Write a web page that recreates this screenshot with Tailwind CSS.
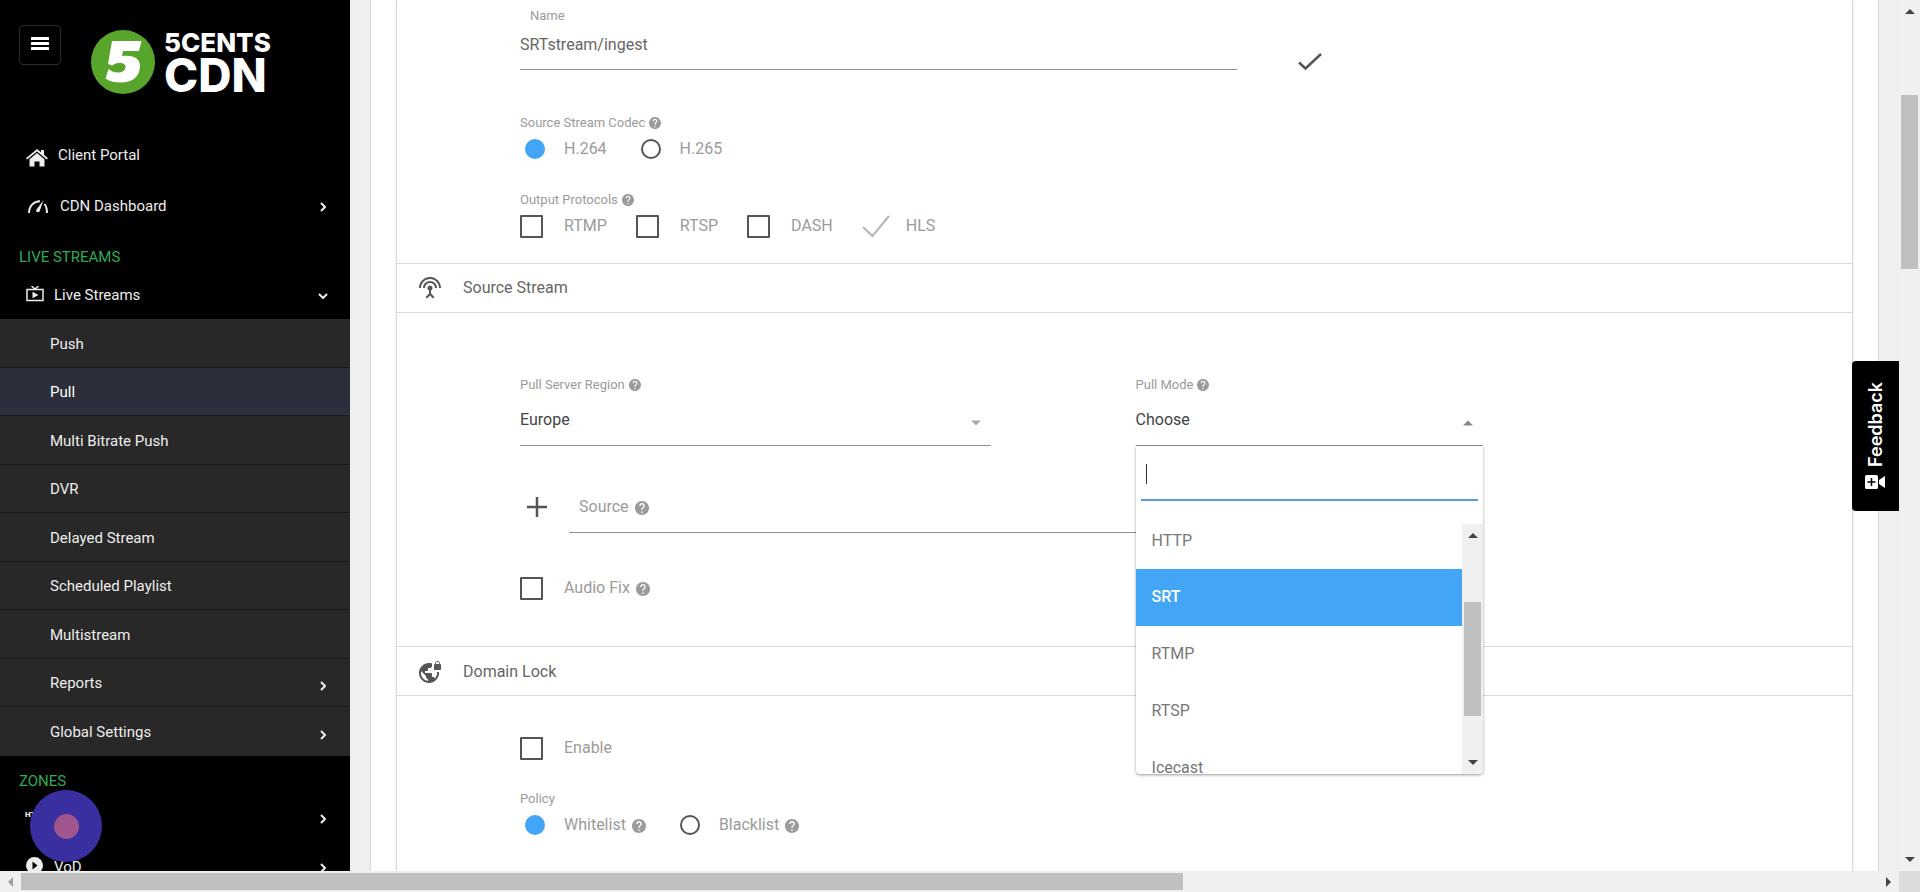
<!DOCTYPE html>
<html lang="en">
  <head>
    <meta charset="UTF-8" />
    <meta name="viewport" content="width=device-width, initial-scale=1.0" />
    <title>5centsCDN - Pull Stream</title>
    <script src="https://cdn.jsdelivr.net/npm/@tailwindcss/browser@4"></script>
  </head>
  <body class="flex h-screen flex-col overflow-hidden bg-[#efefef] font-['Roboto',sans-serif] text-base text-[#9b9b9b]">
    <!-- Shared icons -->
    <svg class="hidden">
      <symbol id="help" viewBox="2 2 20 20">
        <path fill="currentColor" d="M12 2C6.48 2 2 6.48 2 12s4.48 10 10 10 10-4.48 10-10S17.52 2 12 2zm1 17h-2v-2h2v2zm2.07-7.75l-.9.92C13.45 12.9 13 13.5 13 15h-2v-.5c0-1.1.45-2.1 1.17-2.83l1.24-1.26c.37-.36.59-.86.59-1.41 0-1.1-.9-2-2-2s-2 .9-2 2H8c0-2.21 1.79-4 4-4s4 1.79 4 4c0 .88-.36 1.68-.93 2.25z" />
      </symbol>
      <symbol id="chevron" viewBox="0 0 6 10">
        <path d="M1 1l4 4-4 4" fill="none" stroke="currentColor" stroke-width="2" />
      </symbol>
      <symbol id="caret" viewBox="0 0 10 5">
        <path d="M0 5l5-5 5 5z" fill="currentColor" />
      </symbol>
    </svg>

    <div class="flex min-h-0 flex-1">
      <!-- Sidebar -->
      <aside class="relative w-[350px] shrink-0 overflow-hidden bg-black text-[15px] text-[#ededed]">
        <div class="flex h-[130px] items-start pl-[19px] pt-[25px]">
          <button aria-label="Toggle menu" class="flex h-10 w-[42px] items-center justify-center rounded border border-[#2b2b2b] pb-1">
            <svg class="h-[13px] w-[18px]" viewBox="0 0 18 13" fill="#fff">
              <rect width="18" height="3" rx=".5" /><rect y="5" width="18" height="3" rx=".5" /><rect y="10" width="18" height="3" rx=".5" />
            </svg>
          </button>
          <a href="#" aria-label="5centsCDN" class="ml-[30px] mt-[5px] flex items-start text-white">
            <svg class="size-16" viewBox="0 0 64 64">
              <circle cx="32" cy="32" r="32" fill="#58a52c" />
              <path fill="#fff" d="M21 11h29.500l-2.500 10H32l-1 5c11-1.500 18.500 2 18 11-.6 10-8 15.500-19 15.500-6 0-11-1-15.500-4l3-9.500c3 2.500 6 3.500 9 3.500 4.500 0 7.500-1.500 8-5 .4-3-2-4.500-5.500-4.500-3 0-5.500.5-7.500 2.500l-4.500-1.500z" />
            </svg>
            <span class="ml-[9px] flex flex-col font-['Inter',sans-serif] font-extrabold">
              <span class="text-[26px] leading-[25px]">5CENTS</span>
              <span class="text-[46px] leading-[40px]">CDN</span>
            </span>
          </a>
        </div>
        <nav>
          <a href="#" class="flex h-[51px] items-center pl-[26px]">
            <svg class="mr-2.5 mt-1 h-[18px] w-[22px]" viewBox="0 0 22 18" fill="currentColor">
              <path d="M11 0l4 3.300V1h3v4.800l4 3.400-1.200 1.400L11 2.400 1.200 10.600 0 9.200z" />
              <path d="M11 4l7.500 6.200V17.500h-5v-5h-5v5h-5v-7.300z" />
            </svg>
            Client Portal
          </a>
          <a href="#" class="flex h-[51px] items-center pl-7 pr-6">
            <svg class="mr-3 h-[14px] w-5" viewBox="0 0 20 14" fill="none" stroke="currentColor" stroke-width="2">
              <path d="M1 13C1 6 6 1 12 1.200M16.500 4C18.500 6.500 19 9.500 19 13" />
              <path fill="currentColor" stroke="none" d="M15.500 0l-4 11.500a2 2 0 01-3.500-1.300z" />
            </svg>
            <span class="flex-1">CDN Dashboard</span>
            <svg class="h-[10px] w-1.5"><use href="#chevron" /></svg>
          </a>
          <h2 class="flex h-[50px] items-center pl-[19px] text-[#2faa53]">LIVE STREAMS</h2>
          <a href="#" class="flex h-[37px] items-center pb-2.5 pl-[26px] pr-[22px]">
            <svg class="mb-1 mr-2.5 h-4 w-[18px]" viewBox="0 0 18 16" fill="none" stroke="currentColor" stroke-width="1.500">
              <path d="M5.500 0L9 3l3.500-3M1 3.500h16v11H1z" />
              <path fill="currentColor" stroke="none" d="M6.500 5.800l6 3.200-6 3.200z" />
            </svg>
            <span class="flex-1">Live Streams</span>
            <svg class="h-1.5 w-[10px]" viewBox="0 0 10 6"><path d="M1 1l4 4 4-4" fill="none" stroke="currentColor" stroke-width="2" /></svg>
          </a>
          <ul class="grid h-[437px] auto-rows-fr divide-y divide-[#1b1b1b] bg-[#282828]">
            <li><a href="#" class="flex h-full items-center pl-[50px] pt-0.5">Push</a></li>
            <li><a href="#" class="flex h-full items-center bg-[#2c2f3b] pl-[50px] pt-0.5 text-white">Pull</a></li>
            <li><a href="#" class="flex h-full items-center pl-[50px] pt-0.5">Multi Bitrate Push</a></li>
            <li><a href="#" class="flex h-full items-center pl-[50px] pt-0.5">DVR</a></li>
            <li><a href="#" class="flex h-full items-center pl-[50px] pt-0.5">Delayed Stream</a></li>
            <li><a href="#" class="flex h-full items-center pl-[50px] pt-0.5">Scheduled Playlist</a></li>
            <li><a href="#" class="flex h-full items-center pl-[50px] pt-0.5">Multistream</a></li>
            <li>
              <a href="#" class="flex h-full items-center pl-[50px] pr-6 pt-0.5"><span class="flex-1">Reports</span><svg class="mt-1 h-[10px] w-1.5"><use href="#chevron" /></svg></a>
            </li>
            <li>
              <a href="#" class="flex h-full items-center pl-[50px] pr-6 pt-0.5"><span class="flex-1">Global Settings</span><svg class="mt-1 h-[10px] w-1.5"><use href="#chevron" /></svg></a>
            </li>
          </ul>
          <h2 class="flex h-[38px] items-end pl-[19px] text-[#2faa53]"><span class="leading-[26px]">ZONES</span></h2>
          <a href="#" class="flex h-[49px] items-center justify-between pl-[25px] pr-6">
            <span class="pb-2 text-[8px] font-black">HTTP</span>
            <svg class="h-[10px] w-1.5"><use href="#chevron" /></svg>
          </a>
          <a href="#" class="flex h-[49px] items-center pl-[26px] pr-6">
            <svg class="mb-1 mr-[11px] size-[17px]" viewBox="0 0 17 17"><circle cx="8.500" cy="8.500" r="8.500" fill="currentColor" /><path d="M6.500 4.500l5 4-5 4z" fill="#000" /></svg>
            <span class="flex-1">VoD</span>
            <svg class="h-[10px] w-1.5"><use href="#chevron" /></svg>
          </a>
        </nav>
        <!-- Recorder bubble -->
        <button aria-label="Record" class="absolute left-[30px] top-[790px] flex size-[72px] items-center justify-center rounded-full bg-[#3a2fa0]">
          <span class="size-[25px] rounded-full bg-[#a0558c]"></span>
        </button>
      </aside>

      <!-- Page -->
      <main class="relative min-w-0 flex-1 overflow-hidden px-5">
        <div class="h-full border-x border-[#d9d9d9] bg-white px-[25px]">
          <form class="h-full border-x border-[#d9d9d9] shadow">
            <section class="pb-[21px] pl-[123px] pt-1.5">
              <div class="grid grid-cols-[718fr_615fr]">
                <div>
                  <label for="name" class="block px-2.5 text-[13px] leading-5">Name</label>
                  <input id="name" type="text" value="SRTstream/ingest" class="h-11 w-full border-b border-[#8f8f8f] pb-1.5 text-[#666] outline-none" />
                </div>
                <button type="button" aria-label="Name is available" class="self-end justify-self-start pl-[61px]">
                  <svg class="h-[17px] w-6" viewBox="0 0 24 17"><path d="M1 9.500l6.500 6L23 1" fill="none" stroke="#555" stroke-width="2.500" /></svg>
                </button>
              </div>
              <fieldset class="mt-[43px]">
                <legend class="text-[13px] leading-5"><span class="flex items-center gap-1">Source Stream Codec <svg class="size-3"><use href="#help" /></svg></span></legend>
                <div class="flex h-8 items-center gap-[29px]">
                  <label class="flex items-center gap-[19px] pl-[5px]"><input type="radio" name="codec" checked class="size-5 appearance-none rounded-full border-2 border-[#555] checked:border-[#42a5f5] checked:bg-[#42a5f5]" />H.264</label>
                  <label class="flex items-center gap-[19px] pl-[5px]"><input type="radio" name="codec" class="size-5 appearance-none rounded-full border-2 border-[#555] checked:border-[#42a5f5] checked:bg-[#42a5f5]" />H.265</label>
                </div>
              </fieldset>
              <fieldset class="mt-[25px]">
                <legend class="text-[13px] leading-5"><span class="flex items-center gap-1">Output Protocols <svg class="size-3"><use href="#help" /></svg></span></legend>
                <div class="flex h-8 items-center gap-[29px]">
                  <label class="flex items-center gap-[21px]"><input type="checkbox" class="size-[23px] appearance-none rounded-[1px] border-2 border-[#555]" />RTMP</label>
                  <label class="flex items-center gap-[21px]"><input type="checkbox" class="size-[23px] appearance-none rounded-[1px] border-2 border-[#555]" />RTSP</label>
                  <label class="flex items-center gap-[21px]"><input type="checkbox" class="size-[23px] appearance-none rounded-[1px] border-2 border-[#555]" />DASH</label>
                  <label class="flex items-center gap-4">
                    <span class="grid">
                      <input type="checkbox" checked disabled class="col-start-1 row-start-1 size-7 appearance-none" />
                      <svg class="col-start-1 row-start-1 size-7" viewBox="0 0 28 28"><path d="M1 15l9.500 9L27 4" fill="none" stroke="#b5b5b5" stroke-width="2" /></svg>
                    </span>
                    HLS
                  </label>
                </div>
              </fieldset>
            </section>

            <h3 class="flex h-[50px] items-center gap-[21px] border-y border-[#dadada] pl-[21px] text-[#666]">
              <svg class="size-6" viewBox="0 0 24 24" fill="#555">
                <path d="M12 5c-3.870 0-7 3.130-7 7h2c0-2.760 2.240-5 5-5s5 2.240 5 5h2c0-3.870-3.130-7-7-7zm1 9.290c.88-.39 1.500-1.260 1.500-2.290 0-1.380-1.120-2.500-2.500-2.500S9.500 10.620 9.500 12c0 1.020.62 1.900 1.500 2.290v3.300L7.590 21 9 22.410l3-3 3 3L16.410 21 13 17.590v-3.300zM12 1C5.930 1 1 5.930 1 12h2c0-4.970 4.030-9 9-9s9 4.030 9 9h2c0-6.070-4.930-11-11-11z" />
              </svg>
              Source Stream
            </h3>

            <section class="pb-[42px] pl-[123px] pt-[62px]">
              <div class="grid grid-cols-[471fr_145fr_348fr_369fr]">
                <div>
                  <label for="region" class="flex items-center gap-1 text-[13px] leading-5">Pull Server Region <svg class="size-3"><use href="#help" /></svg></label>
                  <div class="grid items-center">
                    <select id="region" class="col-start-1 row-start-1 h-[51px] w-full appearance-none border-b border-[#8f8f8f] text-[#444] outline-none">
                      <option>Europe</option>
                    </select>
                    <svg class="pointer-events-none col-start-1 row-start-1 mr-2.5 mt-1 h-1.5 w-[10px] rotate-180 justify-self-end text-[#aaa]"><use href="#caret" /></svg>
                  </div>
                </div>
                <div class="relative col-start-3">
                  <label for="mode" class="flex items-center gap-1 text-[13px] leading-5">Pull Mode <svg class="size-3"><use href="#help" /></svg></label>
                  <div class="grid items-center">
                    <select id="mode" class="col-start-1 row-start-1 h-[51px] w-full appearance-none border-b border-[#8f8f8f] text-[#444] outline-none">
                      <option>Choose</option>
                    </select>
                    <svg class="pointer-events-none col-start-1 row-start-1 mr-2.5 mt-1 h-1.5 w-[10px] justify-self-end text-[#888]"><use href="#caret" /></svg>
                  </div>
                  <!-- Open menu -->
                  <div class="absolute inset-x-0 top-full z-10 overflow-hidden rounded-b bg-white text-[#777] shadow-[0_1px_3px_rgba(0,0,0,0.4)]">
                    <div class="px-[5px] pb-[23px]">
                      <div class="flex h-[55px] items-center border-b-2 border-[#5a9fd0] pb-3.5 pl-[5px] pt-4">
                        <span class="h-5 w-px bg-[#333]"></span>
                        <input type="text" aria-label="Search pull mode" class="min-w-0 flex-1 outline-none" />
                      </div>
                    </div>
                    <div class="flex h-[250px]">
                      <ul role="listbox" class="flex flex-1 flex-col justify-end overflow-hidden">
                        <li role="option" class="-mt-3 flex h-[57px] shrink-0 items-center pl-4">HTTP</li>
                        <li role="option" aria-selected="true" class="flex h-[57px] shrink-0 items-center bg-[#42a5f5] pb-0.5 pl-4 font-medium text-white">SRT</li>
                        <li role="option" class="flex h-[57px] shrink-0 items-center pb-0.5 pl-4">RTMP</li>
                        <li role="option" class="flex h-[57px] shrink-0 items-center pb-0.5 pl-4">RTSP</li>
                        <li role="option" class="flex h-[34px] shrink-0 items-start pl-4 pt-4">Icecast</li>
                      </ul>
                      <div class="flex w-[21px] flex-col items-center bg-[#f0f0f0] py-[9px] text-[#444]">
                        <svg class="h-[5px] w-[10px]"><use href="#caret" /></svg>
                        <div class="mt-16 h-[114px] w-[17px] bg-[#c0c0c0]"></div>
                        <svg class="mt-auto h-[5px] w-[10px] rotate-180"><use href="#caret" /></svg>
                      </div>
                    </div>
                  </div>
                </div>
              </div>
              <div class="mt-[35px] grid h-[52px] grid-cols-[964fr_369fr]">
                <div class="flex">
                  <button type="button" aria-label="Add source" class="flex w-[49px] items-center pl-[7px]">
                    <svg class="size-5" viewBox="0 0 20 20"><path d="M10 0v20M0 10h20" stroke="#555" stroke-width="2.500" /></svg>
                  </button>
                  <div class="grid flex-1 items-center border-b border-[#8f8f8f]">
                    <label for="source" class="col-start-1 row-start-1 flex items-center gap-1.5 pl-2.5">Source <svg class="mt-0.5 size-3.5"><use href="#help" /></svg></label>
                    <input id="source" type="text" class="col-start-1 row-start-1 h-full w-full bg-transparent outline-none" />
                  </div>
                </div>
              </div>
              <div class="mt-[39px] flex h-8 items-center">
                <label class="flex items-center gap-[21px]"><input type="checkbox" class="size-[23px] appearance-none rounded-[1px] border-2 border-[#555]" /><span class="flex items-center gap-1.5">Audio Fix <svg class="mt-0.5 size-3.5"><use href="#help" /></svg></span></label>
              </div>
            </section>

            <h3 class="flex h-[50px] items-center gap-[21px] border-y border-[#dadada] pl-[21px] pt-0.5 text-[#666]">
              <svg class="size-6" viewBox="0 0 24 24" fill="#555">
                <path d="M22 4v-.5C22 2.120 20.880 1 19.500 1S17 2.120 17 3.500V4c-.55 0-1 .45-1 1v4c0 .55.45 1 1 1h5c.55 0 1-.45 1-1V5c0-.55-.45-1-1-1zm-.8 0h-3.400v-.5c0-.94.76-1.700 1.700-1.700s1.700.76 1.700 1.700V4zm-2.280 8c.04.33.08.66.08 1 0 2.080-.8 3.970-2.100 5.390-.26-.81-1-1.390-1.900-1.390h-1v-3c0-.55-.45-1-1-1H7v-2h2c.55 0 1-.45 1-1V8h2c1.100 0 2-.9 2-2V3.460c-.95-.3-1.950-.46-3-.46C5.480 3 1 7.480 1 13s4.480 10 10 10 10-4.480 10-10c0-.34-.02-.67-.05-1h-2.030zM10 20.930c-3.950-.49-7-3.850-7-7.930 0-.62.08-1.210.21-1.790L8 16v1c0 1.100.9 2 2 2v1.930z" />
              </svg>
              Domain Lock
            </h3>

            <section class="pl-[123px] pt-9">
              <div class="flex h-8 items-center">
                <label class="flex items-center gap-[21px]"><input type="checkbox" class="size-[23px] appearance-none rounded-[1px] border-2 border-[#555]" />Enable</label>
              </div>
              <fieldset class="mt-[25px]">
                <legend class="text-[13px] leading-5">Policy</legend>
                <div class="flex h-8 items-center gap-[29px]">
                  <label class="flex items-center gap-[19px] pl-[5px]"><input type="radio" name="policy" checked class="size-5 appearance-none rounded-full border-2 border-[#555] checked:border-[#42a5f5] checked:bg-[#42a5f5]" /><span class="flex items-center gap-1.5">Whitelist <svg class="mt-0.5 size-3.5"><use href="#help" /></svg></span></label>
                  <label class="flex items-center gap-[19px] pl-[5px]"><input type="radio" name="policy" class="size-5 appearance-none rounded-full border-2 border-[#555] checked:border-[#42a5f5] checked:bg-[#42a5f5]" /><span class="flex items-center gap-1.5">Blacklist <svg class="mt-0.5 size-3.5"><use href="#help" /></svg></span></label>
                </div>
              </fieldset>
            </section>
          </form>
        </div>
        <button class="absolute right-0 top-[361px] flex h-[150px] w-[47px] rotate-180 items-center justify-center gap-2 rounded-r bg-black font-['Inter',sans-serif] text-lg font-semibold text-white [writing-mode:vertical-rl]">
          Feedback
          <svg class="order-first h-[14px] w-5 rotate-180" viewBox="0 0 20 14">
            <rect width="13" height="14" rx="1.500" fill="#fff" />
            <path d="M6.500 3v8M2.500 7h8" stroke="#000" stroke-width="1.500" />
            <path d="M14 5l6-4v12l-6-4z" fill="#fff" />
          </svg>
        </button>
      </main>

      <!-- Vertical scrollbar -->
      <div class="flex w-[21px] shrink-0 flex-col items-center bg-[#f0f0f0] py-[9px] text-[#444]">
        <svg class="h-[5px] w-[10px]"><use href="#caret" /></svg>
        <div class="mt-[81px] h-[174px] w-[17px] bg-[#c0c0c0]"></div>
        <svg class="mt-auto h-[5px] w-[10px] rotate-180"><use href="#caret" /></svg>
      </div>
    </div>

    <!-- Horizontal scrollbar -->
    <div class="flex h-[21px] shrink-0 items-center bg-[#f0f0f0]">
      <svg class="mx-2 h-[10px] w-[5px]" viewBox="0 0 5 10"><path d="M5 0v10L0 5z" fill="#a0a0a0" /></svg>
      <div class="h-[17px] w-[60.5%] bg-[#c0c0c0]"></div>
      <svg class="ml-auto mr-2 h-[10px] w-[5px]" viewBox="0 0 5 10"><path d="M0 0v10l5-5z" fill="#444" /></svg>
      <div class="size-[21px] bg-[#dcdcdc]"></div>
    </div>
  </body>
</html>
